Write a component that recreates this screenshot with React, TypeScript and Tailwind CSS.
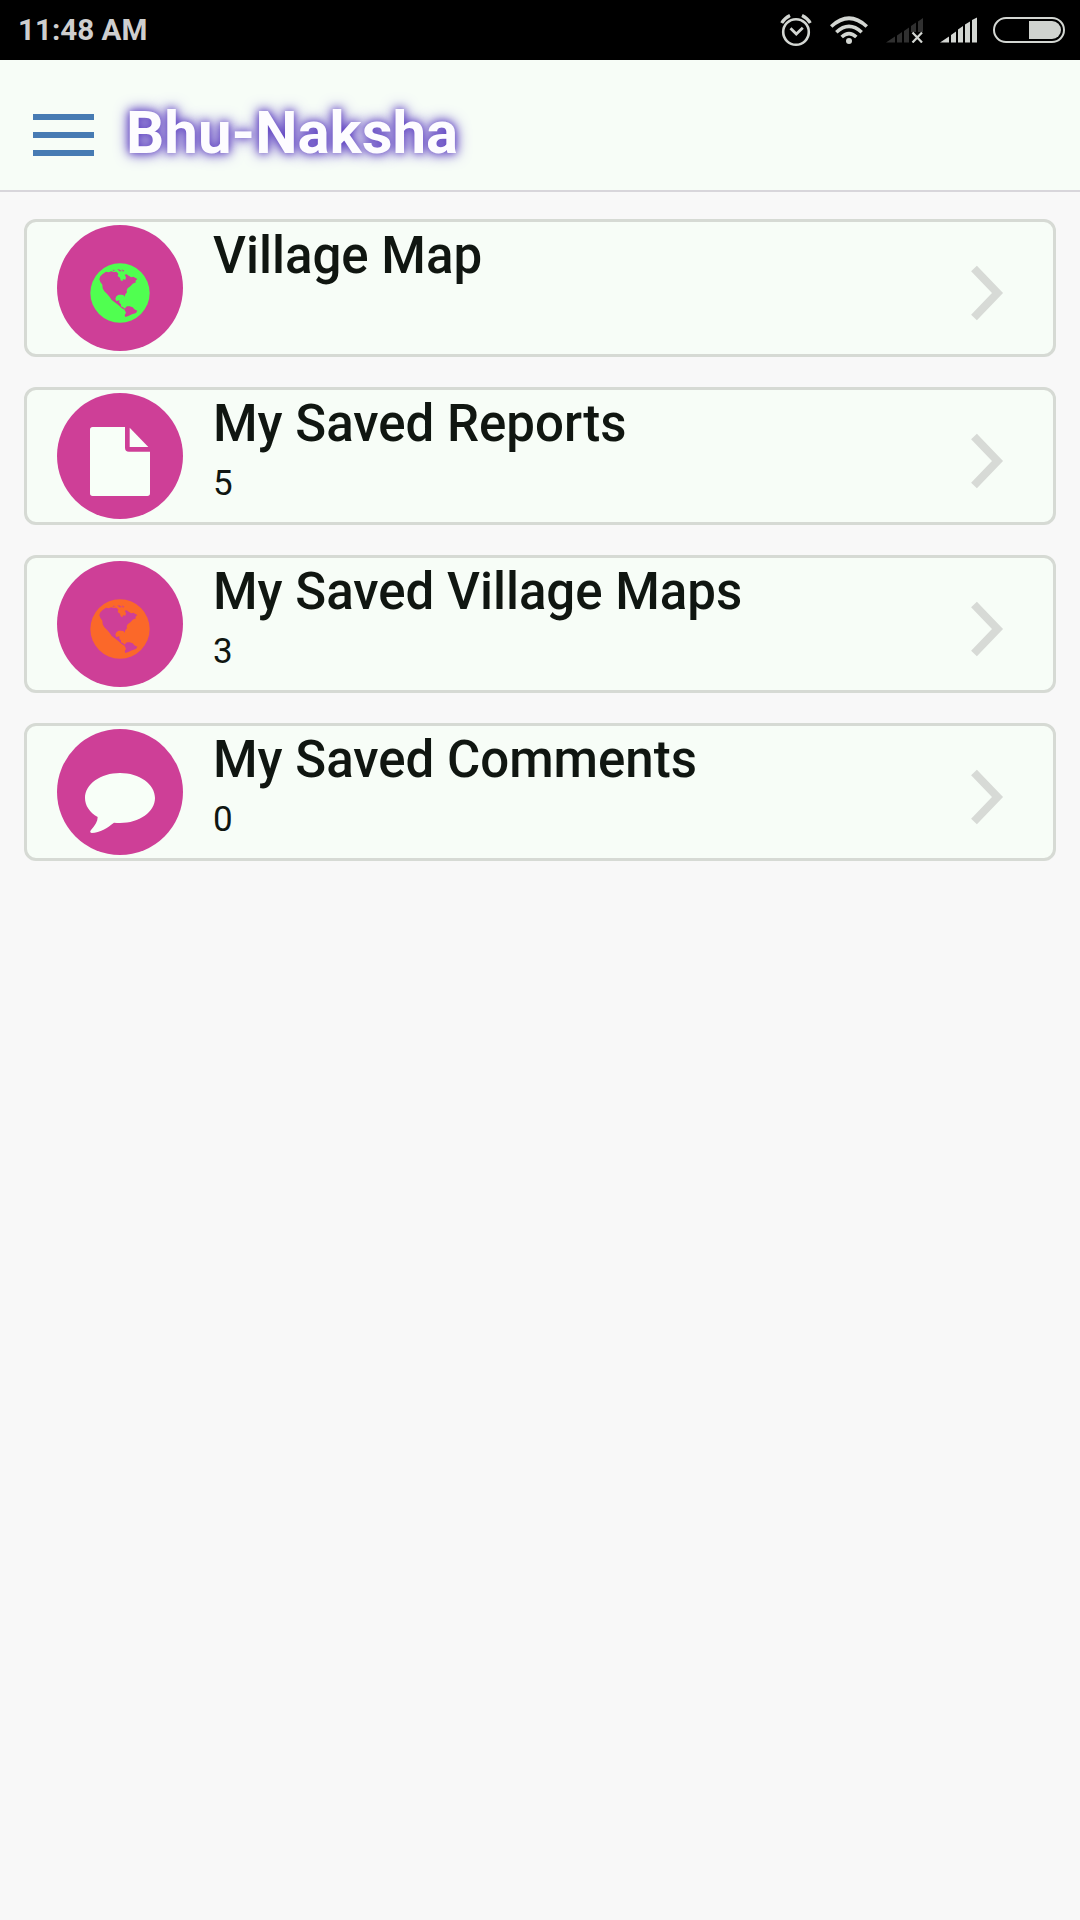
import type { ReactNode } from "react";

const GlobeIcon = ({ className }: { className?: string }) => (
  <svg viewBox="0 0 180 180" className={className}>
    <circle cx="90" cy="90" r="89" fill="currentColor" />
    <g fill="#ce3f97">
      <path d="M28 49L31 40L38 33L48 26L56 28L64 25L72 27L79 26L85 32L83 39L90 44L92 52L97 55L99 49L106 50L108 43L104 35L110 34L116 38L124 43L130 41L142 48L136 54L138 58L128 62L122 69L113 76L110 82L111 88L106 94L104 101L101 97L95 95L86 95L79 100L76 107L79 114L88 112L88 119L93 124L93 130L99 133L107 139L103 140L94 134L84 125L73 117L65 111L59 102L52 94L43 85L38 76L37 65L31 57Z" />
      <path d="M68 20L76 21L70 24ZM82 18L90 20L96 25L88 25ZM95 19L103 23L99 26Z" />
      <path d="M106 134L111 130L119 130L128 133L133 139L142 143L138 150L126 154L115 159L106 162L104 157L108 149L104 142Z" />
    </g>
  </svg>
);

const DocumentIcon = ({ className }: { className?: string }) => (
  <svg viewBox="0 0 180 207" className={className} fill="currentColor">
    <path d="M8 0H105V62Q105 74 117 74H180V199Q180 207 172 207H8Q0 207 0 199V8Q0 0 8 0Z" />
    <path d="M119 2L175 60H119Z" />
  </svg>
);

const ChatIcon = ({ className }: { className?: string }) => (
  <svg viewBox="0 0 210 180" className={className} fill="currentColor">
    <path d="M105 0C163 0 210 33 210 75S163 150 105 150C99 150 93 150 87 149C68 164 45 179 20 180C14 179 15 175 18 171C31 157 38 145 38 132C14 118 0 98 0 75C0 33 47 0 105 0Z" />
  </svg>
);

const items: { title: string; count?: number; icon: ReactNode }[] = [
  {
    title: "Village Map",
    icon: <GlobeIcon className="mt-[10px] h-[60px] w-[60px] text-[#50ff50]" />,
  },
  {
    title: "My Saved Reports",
    count: 5,
    icon: <DocumentIcon className="mt-[11px] h-[69px] w-[60px]" />,
  },
  {
    title: "My Saved Village Maps",
    count: 3,
    icon: <GlobeIcon className="mt-[10px] h-[60px] w-[60px] text-[#fb6829]" />,
  },
  {
    title: "My Saved Comments",
    count: 0,
    icon: <ChatIcon className="mt-[21px] h-[60px] w-[70px]" />,
  },
];

function StatusBar() {
  return (
    <div className="flex h-[60px] items-center justify-between bg-black pr-[15px] pl-[18px] text-[#d3d6d2]">
      <span className="text-[29.6px] leading-[60px] font-bold text-[#cecece]">11:48 AM</span>
      <div className="flex items-center">
        <svg viewBox="0 0 32 34" className="h-[34px] w-8" fill="none" stroke="currentColor">
          <circle cx="16" cy="19" r="12.8" strokeWidth="2.6" />
          <path d="M10.5 15.2L16.3 21L22.8 14.8" strokeWidth="2.8" />
          <path d="M1.7 10Q4.5 5.2 10 2.5M30.3 10Q27.5 5.2 22 2.5" strokeWidth="3.2" />
        </svg>
        <svg viewBox="0 0 38 28" className="ml-[18px] h-7 w-[38px]" fill="none" stroke="currentColor" strokeWidth="3.6">
          <path d="M1.2 10.5Q19 -6 36.8 10.5" />
          <path d="M6.3 16.2Q19 4.5 31.7 16.2" />
          <path d="M11.7 21Q19 14.3 26.3 21" />
          <circle cx="19" cy="25" r="3" fill="currentColor" stroke="none" />
        </svg>
        <svg viewBox="0 0 37 26" className="ml-[18px] h-[26px] w-[37px]">
          <path d="M0 25.5L9 19.5V25.5ZM11 18.5L16 15V25.5H11ZM18 14L23 10.5V25.5H18ZM25 9L30 5.5V25.5H25ZM32 4.5L37 1V25.5H32Z" fill="#303030" />
          <path d="M25 15H37V26H25Z" fill="#000" />
          <path d="M26.5 15.5L36 25.5M36 15.5L26.5 25.5" stroke="currentColor" strokeWidth="2.2" />
        </svg>
        <svg viewBox="0 0 38 26" className="ml-[17px] h-[26px] w-[38px]" fill="currentColor">
          <path d="M0 25.5L9 19.5V25.5ZM11 18L16 14.5V25.5H11ZM18 12.5L23 9V25.5H18ZM25 7.5L30 4.5V25.5H25ZM32 3L37 .5V25.5H32Z" />
        </svg>
        <div className="ml-[15px] flex h-[26px] w-[72px] justify-end rounded-full border-2 border-current p-0.5">
          <div className="w-8 rounded-r-full bg-[#d0d3cf]" />
        </div>
      </div>
    </div>
  );
}

function Header() {
  return (
    <header className="flex h-[132px] items-center border-b-2 border-[#d8d6db] bg-[#f7fdf7] pl-[33px]">
      <button className="mt-5 flex w-[61px] flex-col gap-3">
        <span className="h-1.5 bg-[#477bb3]" />
        <span className="h-1.5 bg-[#477bb3]" />
        <span className="h-1.5 bg-[#477bb3]" />
      </button>
      <h1 className="mt-[15px] ml-8 text-[60px] leading-[70px] font-bold text-[#fdfcff] [text-shadow:0_0_9px_#5a3cc0,0_0_15px_#5a3cc0]">
        Bhu-Naksha
      </h1>
    </header>
  );
}

export default function App() {
  return (
    <div className="min-h-[1920px] w-[1080px] bg-[#f8f8f8] font-['Roboto',sans-serif]">
      <StatusBar />
      <Header />
      <main className="flex flex-col gap-[30px] px-6 pt-[27px]">
        {items.map((item) => (
          <div
            key={item.title}
            className="flex h-[138px] rounded-xl border-[3px] border-[#d6dad4] bg-[#f7fdf7] pr-[49px] pl-[30px]"
          >
            <div className="mt-[3px] flex h-[126px] w-[126px] shrink-0 items-center justify-center rounded-full bg-[#ce3f97] text-[#f8fff8]">
              {item.icon}
            </div>
            <div className="ml-[30px] flex-1 text-[#101611]">
              <h2 className="mt-[3px] text-[51px] leading-[62px] font-medium">{item.title}</h2>
              {item.count !== undefined && (
                <p className="mt-[8px] text-[35px] leading-[42px]">{item.count}</p>
              )}
            </div>
            <svg
              viewBox="0 0 34 56"
              className="mt-[43px] h-14 w-[34px]"
              fill="none"
              stroke="#d7dad6"
              strokeWidth="8"
            >
              <path d="M4 3.5L27.5 28L4 52.5" />
            </svg>
          </div>
        ))}
      </main>
    </div>
  );
}
